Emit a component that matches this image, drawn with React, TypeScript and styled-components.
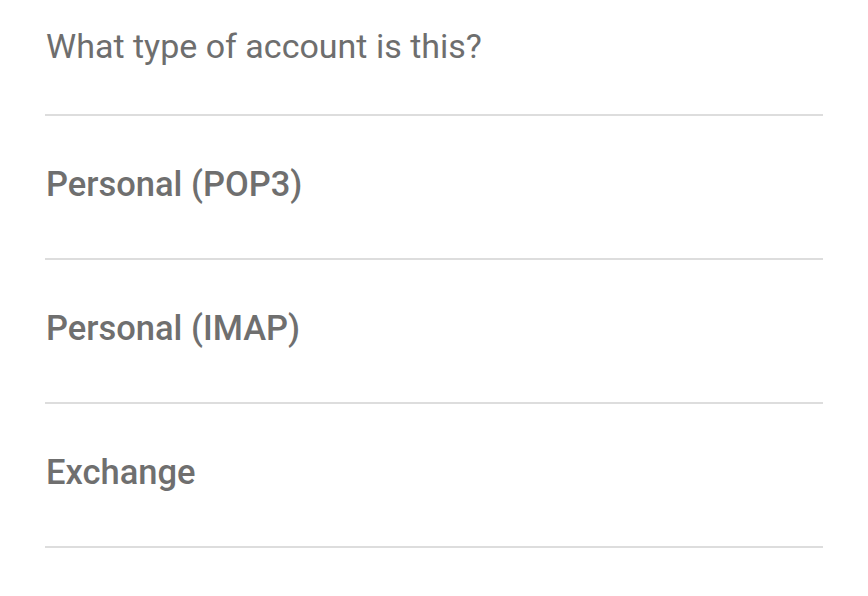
import React from 'react';
import styled, { createGlobalStyle } from 'styled-components';

const GlobalStyle = createGlobalStyle`
  html, body {
    margin: 0;
    padding: 0;
    background: #ffffff;
  }
  body {
    font-family: Roboto, "Liberation Sans", sans-serif;
  }
`;

const Page = styled.div`
  padding: 0 45px;
  background: #ffffff;
`;

const Title = styled.div`
  font-size: 34px;
  line-height: 40px;
  font-weight: 400;
  color: #6e6e6e;
  padding: 26px 0 48px 1px;
  border-bottom: 2px solid #dddddd;
`;

const List = styled.ul`
  list-style: none;
  margin: 0;
  padding: 0;
`;

const Option = styled.li`
  font-size: 34.5px;
  line-height: 40px;
  font-weight: 500;
  color: #6f6f6f;
  padding: 48px 0 54px 1px;
  border-bottom: 2px solid #dddddd;
  cursor: pointer;
`;

const options = ['Personal (POP3)', 'Personal (IMAP)', 'Exchange'];

function App() {
  return (
    <>
      <GlobalStyle />
      <Page>
        <Title>What type of account is this?</Title>
        <List>
          {options.map((o) => (
            <Option key={o}>{o}</Option>
          ))}
        </List>
      </Page>
    </>
  );
}

export default App;
